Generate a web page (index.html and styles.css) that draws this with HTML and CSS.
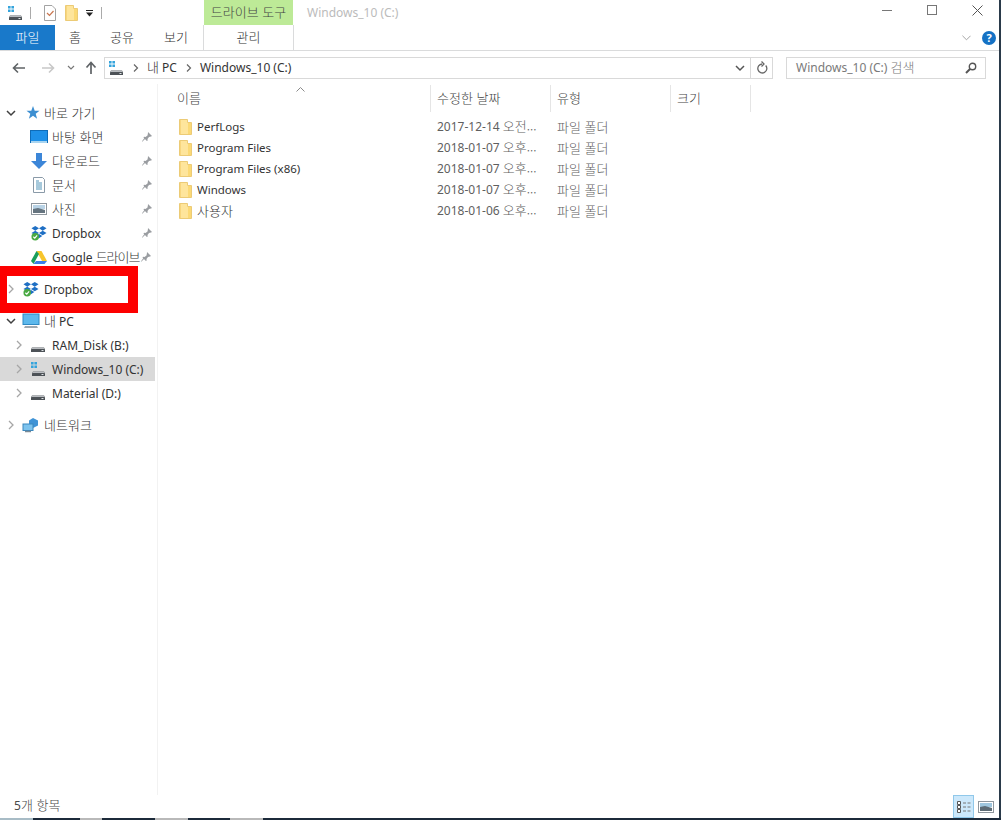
FILE: index.html
```html
<!DOCTYPE html>
<html lang="ko">
<head>
    <meta charset="UTF-8">
    <meta name="viewport" content="width=device-width, initial-scale=1.0">
    <title>Windows_10 (C:)</title>
    <link rel="stylesheet" href="styles.css">
</head>
<body>
    <svg class="defs" width="0" height="0">
        <symbol id="drive" viewBox="0 0 16 16">
            <path d="M2 10.5h12l1 2V15H1v-2.500z" fill="#4d5257"/>
            <path d="M2 10.5h12l.6 1.500H1.400z" fill="#b9bcc0"/>
            <rect x="11.5" y="13" width="2" height="1" fill="#dfe3e6"/>
        </symbol>
        <symbol id="winDrive" viewBox="0 0 16 16">
            <path d="M1 1h2.600v2.600H1zM4.400 1H7v2.600H4.400zM1 4.400h2.600V7H1zM4.400 4.400H7V7H4.400z" fill="#35a4dc"/>
            <path d="M3 10.5h11l1 2V15H2v-2.500z" fill="#4d5257"/>
            <path d="M3 10.5h11l.6 1.500H2.400z" fill="#b9bcc0"/>
            <rect x="11.5" y="13" width="2" height="1" fill="#dfe3e6"/>
        </symbol>
        <symbol id="folder" viewBox="0 0 13 16">
            <path d="M.5.500h8v3h4v12H.5z" fill="#fee59c" stroke="#eccb76"/>
            <path d="M1 1h1v14H1z" fill="#f8d67e"/>
            <path d="M9 4h3v11H9z" fill="#fbd976"/>
        </symbol>
        <symbol id="pin" viewBox="0 0 12 12">
            <path d="M7 1l4 4-1 .6-2 .4-1.500 2 .2 1.500-.8.5-3.400-3.400.5-.8 1.500.2 2-1.500.4-2zM4 8l-3 3 .2-.9 2-2.800z" fill="#9a9da1"/>
        </symbol>
        <symbol id="dropbox" viewBox="0 0 18 17">
            <path d="M5 1l4 2.500L5 6 1 3.500zM13 1l4 2.500L13 6 9 3.500zM5 6l4 2.500L5 11 1 8.500zM13 6l4 2.500L13 11 9 8.500zM5.500 11.800L9 9.500l3.500 2.300L9 14z" fill="#1f6fc4"/>
            <circle cx="5" cy="12.500" r="4" fill="#49a942"/>
            <path d="M3 12.500l1.500 1.500L7 11" fill="none" stroke="#fff" stroke-width="1.200"/>
        </symbol>
        <symbol id="chevR" viewBox="0 0 8 10">
            <path d="M2 1l4 4-4 4" fill="none" stroke="#a6a6a6" stroke-width="1.300"/>
        </symbol>
        <symbol id="chevD" viewBox="0 0 10 8">
            <path d="M1 2l4 4 4-4" fill="none" stroke="#404040" stroke-width="1.500"/>
        </symbol>
    </svg>

    <div class="window">
        <header class="titlebar">
            <div class="qat">
                <svg class="ic16"><use href="#winDrive"/></svg>
                <span class="qat-sep"></span>
                <svg class="ic16" viewBox="0 0 14 16">
                    <path d="M1.500.500h7.500l3.500 3.500v11.500h-11z" fill="#fff" stroke="#a3a3a3"/>
                    <path d="M4 8l2.500 2.500L10.500 6" fill="none" stroke="#c9764f" stroke-width="1.200"/>
                </svg>
                <svg class="qat-folder"><use href="#folder"/></svg>
                <svg class="qat-more" viewBox="0 0 8 8">
                    <path d="M0 1h7v1H0zM0 3.500h7l-3.500 4z" fill="#222"/>
                </svg>
                <span class="qat-sep"></span>
            </div>
            <div class="tool-title ko">드라이브 도구</div>
            <div class="win-title">Windows_10 (C:)</div>
            <div class="win-btns">
                <span class="win-min"></span>
                <span class="win-max"></span>
                <svg class="win-close" viewBox="0 0 11 11">
                    <path d="M.5.500l10 10M10.500.500l-10 10" stroke="#555" fill="none"/>
                </svg>
            </div>
        </header>

        <nav class="ribbon">
            <div class="tab tab-file ko">파일</div>
            <div class="tab tab-home ko">홈</div>
            <div class="tab tab-share ko">공유</div>
            <div class="tab tab-view ko">보기</div>
            <div class="tab tab-manage ko">관리</div>
            <div class="ribbon-right">
                <svg class="rib-chev" viewBox="0 0 10 6"><path d="M.5.500L5 5 9.500.500" fill="none" stroke="#9a9a9a"/></svg>
                <span class="help">?</span>
            </div>
        </nav>

        <div class="addressrow">
            <svg class="nav-btn" viewBox="0 0 14 12"><path d="M13 6H2M6 1.500L1.500 6 6 10.500" fill="none" stroke="#5f6366" stroke-width="1.600"/></svg>
            <svg class="nav-btn nav-fwd" viewBox="0 0 14 12"><path d="M1 6h11M8 1.500L12.500 6 8 10.500" fill="none" stroke="#c8c8c8" stroke-width="1.600"/></svg>
            <svg class="nav-recent" viewBox="0 0 8 6"><path d="M1 1l3 3 3-3" fill="none" stroke="#777" stroke-width="1.200"/></svg>
            <svg class="nav-up" viewBox="0 0 12 14"><path d="M6 13V2M1.500 6.500L6 1.500l4.500 5" fill="none" stroke="#5f6366" stroke-width="1.700"/></svg>
            <div class="addressbar">
                <svg class="ic16"><use href="#winDrive"/></svg>
                <svg class="crumb-sep" viewBox="0 0 8 10"><path d="M2 1.500L5.500 5 2 8.500" fill="none" stroke="#666" stroke-width="1.200"/></svg>
                <span><span class="ko">내</span> PC</span>
                <svg class="crumb-sep" viewBox="0 0 8 10"><path d="M2 1.500L5.500 5 2 8.500" fill="none" stroke="#666" stroke-width="1.200"/></svg>
                <span>Windows_10 (C:)</span>
                <svg class="addr-drop" viewBox="0 0 10 8"><path d="M1 2l4 4 4-4" fill="none" stroke="#555" stroke-width="1.500"/></svg>
                <div class="addr-refresh">
                    <svg viewBox="0 0 12 13"><path d="M9.700 4.500A4.500 4.500 0 1 1 6 3M5.500.500L8 3 5.500 5.500" fill="none" stroke="#666" stroke-width="1.300"/></svg>
                </div>
            </div>
            <div class="searchbox">
                <span>Windows_10 (C:) <span class="ko">검색</span></span>
                <svg viewBox="0 0 12 12"><circle cx="7.500" cy="4.500" r="3.200" fill="none" stroke="#555" stroke-width="1.400"/><path d="M5 7l-4 4" stroke="#555" stroke-width="2"/></svg>
            </div>
        </div>

        <div class="main">
            <aside class="sidebar">
                <div class="tree-row lvl0">
                    <svg class="twist"><use href="#chevD"/></svg>
                    <svg class="ic16 star" viewBox="0 0 16 16"><path d="M9 1l1.700 4.700h4.800l-3.800 3 1.400 5-4.100-3-4.100 3 1.400-5-3.800-3h4.800z" fill="#3d8fd1"/></svg>
                    <span class="ko">바로 가기</span>
                </div>
                <div class="tree-row lvl1">
                    <svg class="ic18" viewBox="0 0 18 16"><rect x=".5" y="1.500" width="17" height="12" fill="#1e90e8" stroke="#0f6cb8"/><rect x="1" y="12" width="16" height="2" fill="#a8d4f0"/></svg>
                    <span class="ko">바탕 화면</span>
                    <svg class="pin"><use href="#pin"/></svg>
                </div>
                <div class="tree-row lvl1">
                    <svg class="ic18" viewBox="0 0 18 16"><path d="M6 0h6v8h5l-8 8-8-8h5z" fill="#3c86d8"/></svg>
                    <span class="ko">다운로드</span>
                    <svg class="pin"><use href="#pin"/></svg>
                </div>
                <div class="tree-row lvl1">
                    <svg class="ic18" viewBox="0 0 18 16"><path d="M3.500.500h9l2 2v13h-11z" fill="#fff" stroke="#8a9aa8"/><path d="M6 4h3M6 6h6M6 8h6M6 10h6M6 12h6" stroke="#4f93b8"/></svg>
                    <span class="ko">문서</span>
                    <svg class="pin"><use href="#pin"/></svg>
                </div>
                <div class="tree-row lvl1">
                    <svg class="ic18" viewBox="0 0 18 16"><rect x="1.500" y="2.500" width="15" height="11" fill="#fff" stroke="#8f979e"/><rect x="3" y="4" width="12" height="4" fill="#b9d3e6"/><path d="M3 8l5-1 7 2v3H3z" fill="#65747f"/></svg>
                    <span class="ko">사진</span>
                    <svg class="pin"><use href="#pin"/></svg>
                </div>
                <div class="tree-row lvl1">
                    <svg class="ic18"><use href="#dropbox"/></svg>
                    <span>Dropbox</span>
                    <svg class="pin"><use href="#pin"/></svg>
                </div>
                <div class="tree-row lvl1">
                    <svg class="ic18" viewBox="0 0 18 16"><path d="M6.500 2h5L17 12h-5z" fill="#f7c52c"/><path d="M6.500 2L1 12l2.500 3L9 5z" fill="#199d5a"/><path d="M3.500 15h11l2.500-3H6z" fill="#3b7de8"/></svg>
                    <span>Google <span class="ko ko-tight">드라이브</span></span>
                    <svg class="pin pin-tight"><use href="#pin"/></svg>
                </div>

                <div class="tree-row lvl0 group-gap">
                    <svg class="twist"><use href="#chevR"/></svg>
                    <svg class="ic18"><use href="#dropbox"/></svg>
                    <span>Dropbox</span>
                </div>

                <div class="tree-row lvl0 group-gap">
                    <svg class="twist"><use href="#chevD"/></svg>
                    <svg class="ic18" viewBox="0 0 18 16"><rect x="1" y="1" width="16" height="10.500" fill="#5cb8ec" stroke="#2f8ac4"/><path d="M3 13h12l1 2H2z" fill="#9ea8b0"/></svg>
                    <span><span class="ko">내</span> PC</span>
                </div>
                <div class="tree-row lvl1 has-twist">
                    <svg class="twist"><use href="#chevR"/></svg>
                    <svg class="ic16"><use href="#drive"/></svg>
                    <span>RAM_Disk (B:)</span>
                </div>
                <div class="tree-row lvl1 has-twist selected">
                    <svg class="twist"><use href="#chevR"/></svg>
                    <svg class="ic16"><use href="#winDrive"/></svg>
                    <span>Windows_10 (C:)</span>
                </div>
                <div class="tree-row lvl1 has-twist">
                    <svg class="twist"><use href="#chevR"/></svg>
                    <svg class="ic16"><use href="#drive"/></svg>
                    <span>Material (D:)</span>
                </div>

                <div class="tree-row lvl0 group-gap">
                    <svg class="twist"><use href="#chevR"/></svg>
                    <svg class="ic18" viewBox="0 0 18 16"><path d="M11 1l5 2.500v5L11 11 7 8.500v-5z" fill="#3f93d6"/><rect x="1" y="7" width="10" height="6.500" fill="#7cc3ee" stroke="#3a87bd"/><path d="M3 14.500h6" stroke="#7a8a96" stroke-width="1.500"/></svg>
                    <span class="ko">네트워크</span>
                </div>
                <div class="callout"></div>
            </aside>

            <section class="content">
                <div class="cols">
                    <div class="col col-name ko">이름<svg class="sort" viewBox="0 0 9 5"><path d="M.5 4.500l4-4 4 4" fill="none" stroke="#8a8a8a"/></svg></div>
                    <div class="col ko">수정한 날짜</div>
                    <div class="col ko">유형</div>
                    <div class="col ko">크기</div>
                </div>
                <div class="files">
                    <div class="file"><div class="f-name"><svg class="folder"><use href="#folder"/></svg>PerfLogs</div><div class="f-date">2017-12-14 <span class="ko">오전...</span></div><div class="f-type ko">파일 폴더</div></div>
                    <div class="file"><div class="f-name"><svg class="folder"><use href="#folder"/></svg>Program Files</div><div class="f-date">2018-01-07 <span class="ko">오후...</span></div><div class="f-type ko">파일 폴더</div></div>
                    <div class="file"><div class="f-name"><svg class="folder"><use href="#folder"/></svg>Program Files (x86)</div><div class="f-date">2018-01-07 <span class="ko">오후...</span></div><div class="f-type ko">파일 폴더</div></div>
                    <div class="file"><div class="f-name"><svg class="folder"><use href="#folder"/></svg>Windows</div><div class="f-date">2018-01-07 <span class="ko">오후...</span></div><div class="f-type ko">파일 폴더</div></div>
                    <div class="file"><div class="f-name ko"><svg class="folder"><use href="#folder"/></svg>사용자</div><div class="f-date">2018-01-06 <span class="ko">오후...</span></div><div class="f-type ko">파일 폴더</div></div>
                </div>
            </section>
        </div>

        <footer class="statusbar">
            <span class="count">5<span class="ko">개 항목</span></span>
            <div class="views">
                <div class="view view-on">
                    <svg viewBox="0 0 16 14"><path d="M1.500 1.500h3v3h-3zM1.500 5.500h3v3h-3zM1.500 9.500h3v3h-3z" fill="#fff" stroke="#555"/><path d="M7 3h3M11.500 3h3M7 7h3M11.500 7h3M7 11h3M11.500 11h3" stroke="#777"/></svg>
                </div>
                <div class="view">
                    <svg viewBox="0 0 16 14"><rect x=".5" y="1.500" width="15" height="11" fill="#fff" stroke="#8f979e"/><rect x="2" y="3" width="12" height="4" fill="#9fc6de"/><path d="M2 7l5-1 7 2v3H2z" fill="#5d6b75"/></svg>
                </div>
            </div>
        </footer>
    </div>

    <div class="taskstrip">
        <i class="s-a"></i><i class="s-d s1"></i><i class="s-g s2"></i><i class="s-d s3"></i><i class="s-g s4"></i><i class="s-d s5"></i><i class="s-g s6"></i><i class="s-d s7"></i>
    </div>
</body>
</html>
```

FILE: styles.css
```css
html, body {
    margin: 0;
    height: 100%;
    background: #fff;
}

body {
    display: flex;
    flex-direction: column;
    height: 820px;
    overflow: hidden;
    font-family: "Noto Sans", "Noto Sans CJK KR", sans-serif;
    font-size: 12px;
    color: #4a4a4a;
}

/* hangul runs a bit bigger and thinner than the latin next to it */
.ko {
    font-family: "Noto Sans CJK KR", sans-serif;
    font-size: 13px;
    font-weight: 300;
    line-height: 1;
}

.ko-tight {
    letter-spacing: -1px;
}

.defs {
    position: absolute;
}

svg {
    display: block;
    flex: none;
}

.window {
    flex: 1;
    display: flex;
    flex-direction: column;
    min-height: 0;
    border-right: 2px solid #2a3a4a;
}

.ic16 {
    width: 16px;
    height: 16px;
}

.ic18 {
    width: 18px;
    height: 16px;
}

/* title bar */
.titlebar {
    display: flex;
    height: 25px;
    align-items: center;
}

.qat {
    display: flex;
    align-items: center;
    width: 204px;
    padding-left: 7px;
    box-sizing: border-box;
}

.qat-sep {
    width: 1px;
    height: 12px;
    background: #aaa;
    margin: 0 11px 0 7px;
}

.qat-folder {
    width: 13px;
    height: 16px;
    margin-left: 7px;
}

.qat-more {
    width: 8px;
    height: 8px;
    margin: 0 0 0 8px;
}

.qat-more + .qat-sep {
    margin-left: 7px;
}

.tool-title {
    width: 89px;
    height: 25px;
    line-height: 24px;
    text-align: center;
    background: #bdea97;
    color: #444;
}

.win-title {
    margin-left: 14px;
    color: #bbb;
}

.win-btns {
    margin-left: auto;
    display: flex;
    align-items: center;
    gap: 35px;
    padding-right: 16px;
    padding-bottom: 5px;
}

.win-min {
    width: 10px;
    height: 1px;
    background: #777;
}

.win-max {
    width: 8px;
    height: 8px;
    border: 1px solid #777;
}

.win-close {
    width: 11px;
    height: 11px;
}

/* ribbon tabs */
.ribbon {
    display: flex;
    height: 25px;
    align-items: stretch;
    border-bottom: 1px solid #dadbdc;
}

.tab {
    line-height: 24px;
    text-align: center;
    color: #333;
}

.tab-file {
    width: 55px;
    background: #1979ca;
    color: #fff;
}

.tab-home {
    width: 40px;
}

.tab-share {
    width: 54px;
}

.tab-view {
    width: 55px;
    border-right: 1px solid #dadbdc;
    box-sizing: border-box;
}

.tab-manage {
    width: 89px;
    border-right: 1px solid #dadbdc;
}

.ribbon-right {
    margin-left: auto;
    display: flex;
    align-items: center;
    gap: 11px;
    padding-right: 3px;
}

.rib-chev {
    width: 9px;
    height: 6px;
}

.help {
    width: 14px;
    height: 14px;
    border-radius: 50%;
    background: #1471c4;
    color: #fff;
    font-weight: 700;
    font-size: 11px;
    line-height: 14px;
    text-align: center;
}

/* address row */
.addressrow {
    display: flex;
    align-items: center;
    height: 33px;
    padding-left: 12px;
    box-sizing: border-box;
}

.nav-btn {
    width: 14px;
    height: 12px;
}

.nav-fwd {
    margin-left: 15px;
}

.nav-recent {
    width: 8px;
    height: 6px;
    margin-left: 12px;
}

.nav-up {
    width: 12px;
    height: 14px;
    margin-left: 10px;
}

.addressbar {
    display: flex;
    align-items: center;
    width: 669px;
    height: 22px;
    margin-left: 7px;
    padding-left: 3px;
    border: 1px solid #d9d9d9;
    box-sizing: border-box;
    color: #333;
}

.crumb-sep {
    width: 8px;
    height: 10px;
    margin: 0 7px 0 8px;
}

.addr-drop {
    width: 10px;
    height: 8px;
    margin-left: auto;
    margin-right: 3px;
}

.addr-refresh {
    width: 21px;
    height: 20px;
    border-left: 1px solid #d9d9d9;
    margin-left: 2px;
    display: flex;
    align-items: center;
    justify-content: center;
}

.addr-refresh svg {
    width: 12px;
    height: 13px;
}

.searchbox {
    display: flex;
    align-items: center;
    justify-content: space-between;
    width: 200px;
    height: 22px;
    margin-left: 13px;
    padding: 0 8px 0 9px;
    border: 1px solid #d9d9d9;
    box-sizing: border-box;
    color: #7a7a7a;
}

.searchbox svg {
    width: 12px;
    height: 12px;
}

/* nav tree */
.main {
    flex: 1;
    display: flex;
    min-height: 0;
}

.sidebar {
    position: relative;
    width: 158px;
    padding-top: 17px;
    padding-right: 2px;
    box-sizing: border-box;
    flex: none;
    border-right: 1px solid #f2f2f2;
    color: #333;
}

.tree-row {
    display: flex;
    align-items: center;
    height: 24px;
    white-space: nowrap;
}

.lvl0 {
    padding-left: 6px;
}

.lvl0 .twist {
    margin-right: 6px;
}

.lvl0 .star {
    margin-left: 2px;
}

.lvl0 > span {
    margin-left: 4px;
}

.lvl1 {
    padding-left: 30px;
}

.lvl1 > span {
    margin-left: 4px;
}

.lvl1.has-twist {
    padding-left: 14px;
}

.lvl1.has-twist .twist {
    margin-right: 6px;
}

.lvl1.has-twist > span {
    margin-left: 6px;
}

.tree-row > .ko {
    margin-bottom: 2px;
}

.twist {
    width: 10px;
    height: 10px;
}

.pin {
    width: 12px;
    height: 12px;
    margin-left: auto;
    margin-right: 2px;
}

.pin-tight {
    margin-left: 1px;
}

.group-gap {
    margin-top: 8px;
}

.selected {
    background: #d9d9d9;
}

.callout {
    position: absolute;
    left: 0;
    top: 182px;
    width: 121px;
    height: 27px;
    border: solid #fd0000;
    border-width: 10px 10px 10px 7px;
}

/* file list */
.content {
    flex: 1;
    min-width: 0;
}

.cols {
    display: grid;
    grid-template-columns: 273px 120px 120px 80px;
    height: 27px;
    margin-top: 1px;
}

.col {
    position: relative;
    border-right: 1px solid #e5e5e5;
    line-height: 25px;
    padding-left: 6px;
    color: #444;
}

.col-name {
    padding-left: 19px;
}

.sort {
    position: absolute;
    left: 138px;
    top: 2px;
    width: 9px;
    height: 5px;
}

.files {
    margin-top: 4px;
}

.file {
    display: grid;
    grid-template-columns: 273px 120px 120px;
    height: 21px;
    align-items: center;
}

.f-name {
    display: flex;
    align-items: center;
    padding-left: 21px;
    font-size: 11.5px;
    color: #333;
}

.f-name.ko {
    font-size: 13px;
}

.folder {
    width: 13px;
    height: 16px;
    margin-right: 5px;
}

.f-date,
.f-type {
    padding-left: 6px;
    color: #5f5f5f;
}

/* status bar */
.statusbar {
    display: flex;
    align-items: center;
    justify-content: space-between;
    height: 23px;
    padding: 0 3px 0 14px;
}

.count {
    margin-bottom: 3px;
}

.views {
    display: flex;
    align-items: center;
    gap: 1px;
}

.view {
    display: flex;
    align-items: center;
    justify-content: center;
    width: 21px;
    height: 23px;
    box-sizing: border-box;
}

.view svg {
    width: 16px;
    height: 14px;
}

.view-on {
    background: #cce8fb;
    border: 1px solid #90c8ea;
}

/* sliver of the taskbar along the bottom edge */
.taskstrip {
    display: flex;
    height: 2px;
    flex: none;
    background: #1c2a3a;
}

.taskstrip i {
    display: block;
    height: 2px;
}

.s-a { width: 33px; background: #a8bcc6; }
.s-d { background: #1c2a3a; }
.s-g { background: #b9b9b9; }
.s1 { width: 47px; }
.s2 { width: 22px; }
.s3 { width: 53px; }
.s4 { width: 33px; }
.s5 { width: 42px; }
.s6 { width: 33px; }
.s7 { flex: 1; }
```
